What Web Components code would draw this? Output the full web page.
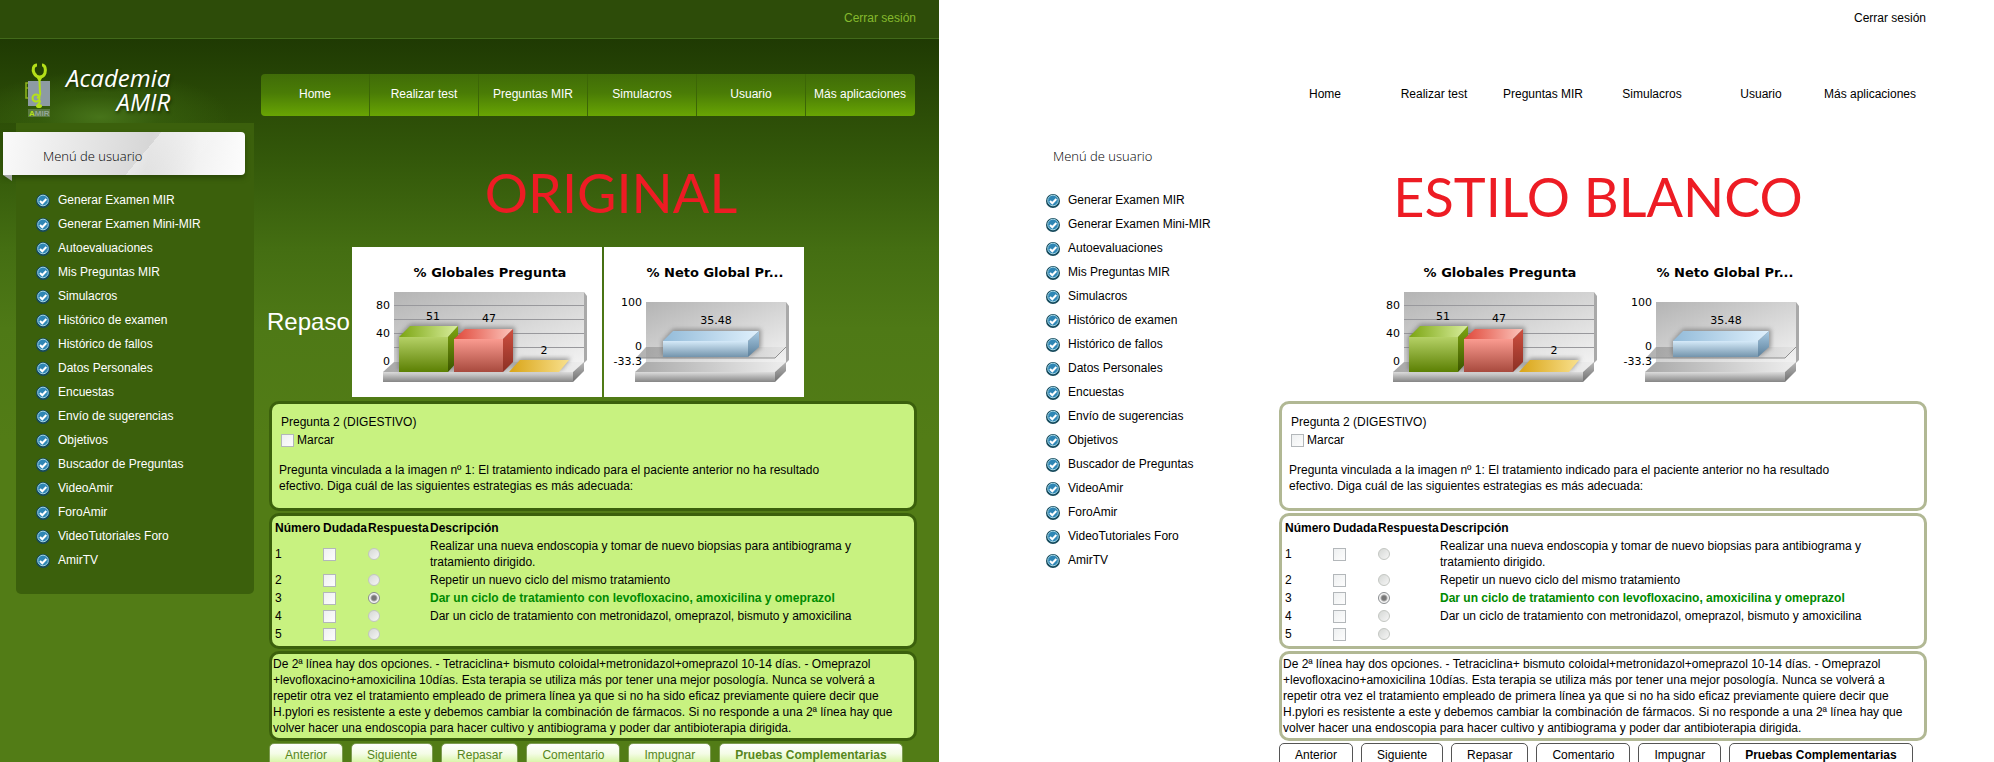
<!DOCTYPE html>
<html lang="es">
<head>
<meta charset="utf-8">
<title>Academia AMIR</title>
<style>
  body { margin: 0; background: #fff; overflow: hidden; font: 12px/16px "Liberation Sans", Arial, sans-serif; color: #000; }
</style>
</head>
<body>
<style-comparison></style-comparison>

<script>
const define = (name, html, setup) => {
  const template = document.createElement('template');
  template.innerHTML = html;
  customElements.define(name, class extends HTMLElement {
    constructor() {
      super();
      this.attachShadow({ mode: 'open' }).append(template.content.cloneNode(true));
    }
    connectedCallback() {
      if (setup && !this.ready) { this.ready = true; setup(this, this.shadowRoot); }
    }
  });
};

/* Logo */
define('amir-logo', `
<style>
  :host { display: flex; align-items: flex-start; gap: 15px; padding: 24px 0 0 24px; height: 60px;
    background: radial-gradient(ellipse 130px 46px at 100px 78px, #47741a 0, #3a640f99 45%, transparent 100%); }
  svg { display: block; flex: none; }
  .name { display: flex; flex-direction: column; font: italic 24px/24px "Open Sans", "Noto Sans", sans-serif; color: #fff;
    margin-top: 3px; text-shadow: 1px 2px 3px #1a3004; }
  .name span + span { text-align: right; }
</style>
<svg width="27" height="56" viewBox="0 0 27 56" aria-hidden="true">
  <path d="M4 18h22v25H4z" fill="#8d9ba3"/>
  <path d="M4 20H2v15h2M2 25h2" fill="none" stroke="#8fb51b" stroke-width="1.5"/>
  <path d="M13 2C9 2 8.500 7 10 10c1.500 3 3 4 5.500 4s4.500-1 5.500-4c1-4 0-8-3-8" fill="none" stroke="#b4e019" stroke-width="3"/>
  <path d="M12 13h7l-2.500 5L17 30h-2L14.500 18z" fill="#b4e019"/>
  <circle cx="12" cy="35" r="3.500" fill="none" stroke="#b4e019" stroke-width="2"/>
  <path d="M16 28c1 5-1 6-3 7M15 37c3 3-2 3-1 6" fill="none" stroke="#b4e019" stroke-width="2"/>
  <ellipse cx="15" cy="43" rx="3" ry="2" fill="#b4e019"/>
  <path d="M4 46h22v8H4z" fill="#5b7a42"/>
  <text x="5" y="53" font-family="Liberation Sans" font-weight="bold" font-size="8" fill="#b4e019">A<tspan fill="#93a699">MIR</tspan></text>
</svg>
<div class="name"><span>Academia</span><span>AMIR</span></div>
`);

/* Top navigation */
define('amir-nav', `
<style>
  :host { display: flex; height: 42px; border-radius: 4px; background: var(--nav-bg); }
  a { flex: 1 1 0; display: flex; align-items: center; justify-content: center; color: var(--link); text-decoration: none;
    white-space: nowrap; padding-bottom: 2px; border-right: 1px solid var(--nav-line); }
  a:last-child { border-right-color: transparent; }
</style>
<a href="#">Home</a><a href="#">Realizar test</a><a href="#">Preguntas MIR</a><a href="#">Simulacros</a><a href="#">Usuario</a><a href="#">Más aplicaciones</a>
`);

/* User menu */
define('check-icon', `
<style>:host { display: block; width: 14px; height: 14px; } svg { display: block; }</style>
<svg width="14" height="14" viewBox="0 0 14 14" aria-hidden="true">
  <circle cx="7" cy="7" r="7" fill="#164a5c"/>
  <circle cx="7" cy="6.500" r="5.300" fill="#2f86b5" stroke="#9fd4e6" stroke-width="1"/>
  <path d="M4 7l2.300 2.300L10.300 5" fill="none" stroke="#fff" stroke-width="2"/>
</svg>
`);
define('amir-menu', `
<style>
  :host { display: block; margin-left: 16px; padding: 9px 9px 22px 0; border-radius: 0 0 5px 5px; background: var(--menu-bg); }
  h2 { position: relative; margin: 0 0 13px -13px; height: 43px; padding: 0 0 7px 40px; box-sizing: border-box;
    display: flex; align-items: flex-end; font: 300 13px/24px "Open Sans", "Noto Sans", sans-serif; color: #000;
    border-radius: 0 4px 4px 0; background: var(--banner-bg); box-shadow: var(--banner-shadow); }
  h2::before { content: ""; position: absolute; left: 0; top: 100%; width: 9px; height: 6px; background: var(--tail);
    clip-path: polygon(0 0, 100% 0, 100% 100%); }
  ul { list-style: none; margin: 0; padding: 0 0 0 20px; }
  li { display: flex; align-items: center; gap: 8px; height: 24px; }
  a { color: var(--link); text-decoration: none; white-space: nowrap; }
  check-icon { margin-top: 2px; }
</style>
<h2>Menú de usuario</h2>
<ul></ul>
`, (host, root) => {
  const items = ['Generar Examen MIR', 'Generar Examen Mini-MIR', 'Autoevaluaciones', 'Mis Preguntas MIR', 'Simulacros',
    'Histórico de examen', 'Histórico de fallos', 'Datos Personales', 'Encuestas', 'Envío de sugerencias', 'Objetivos',
    'Buscador de Preguntas', 'VideoAmir', 'ForoAmir', 'VideoTutoriales Foro', 'AmirTV'];
  root.querySelector('ul').innerHTML = items.map(t => `<li><check-icon></check-icon><a href="#">${t}</a></li>`).join('');
});

/* Charts */
const chartDefs = `
<style>
  :host { display: block; flex: none; background: #fff; }
  svg { display: block; font: 11px "DejaVu Sans", Verdana, sans-serif; }
  .t { font-size: 13px; font-weight: bold; }
</style>`;
const grad = (id, a, b, extra = 'x2="0" y2="1"') =>
  `<linearGradient id="${id}" ${extra}><stop stop-color="${a}"/><stop offset="1" stop-color="${b}"/></linearGradient>`;
const common = grad('wall', '#b4b4b4', '#f2f2f2', 'x2="1" y2="1"') + grad('floor', '#a8a8a8', '#eeeeee', 'x2="1" y2="0"') +
  grad('front', '#dcdcdc', '#858585') + grad('side', '#b8b8b8', '#707070') +
  '<filter id="soft" x="-20%" y="-20%" width="140%" height="140%"><feGaussianBlur stdDeviation="2"/></filter>';

define('global-chart', `${chartDefs}
<svg width="250" height="150" viewBox="0 0 250 150" role="img" aria-label="% Globales Pregunta">
  <defs>${common}
    ${grad('g1', '#b5d166', '#5c8003')}${grad('g2', '#7ba511', '#d9ee9d', 'x2="1" y2="0"')}${grad('g3', '#7ea60f', '#3b5400')}
    ${grad('r1', '#fa9b90', '#a84a3e')}${grad('r2', '#e0483a', '#fcc4bb', 'x2="1" y2="0"')}${grad('r3', '#cf4f40', '#8b3024')}
    ${grad('y1', '#d9a416', '#f8e08d', 'x2="1" y2="0"')}
  </defs>
  <path d="M42 45H232V115H42z" fill="url(#wall)"/>
  <path d="M232 45l3 4v64l-3 3z" fill="#a9a9a9"/>
  <path d="M42 58.500H232M42 72.500H232M42 86.500H232M42 100.500H232" stroke="#98989c"/>
  <path d="M42 115H232L221 125H31z" fill="url(#floor)"/>
  <path d="M31 125H221V135H31z" fill="url(#front)"/>
  <path d="M221 125l11-10v9l-11 11z" fill="url(#side)"/>
  <path d="M46 90l12-13h50v38l-10 8H46zM102 92l10-12h51v35l-10 8h-51zM158 123l10-12h51l-10 12z" fill="#666" opacity=".6" filter="url(#soft)"/>
  <path d="M47 90l11-11h48L96 90z" fill="url(#g2)"/><path d="M96 90l10-11v35L96 125z" fill="url(#g3)"/><path d="M47 90h49v35H47z" fill="url(#g1)"/>
  <path d="M102 92l11-10h48l-10 10z" fill="url(#r2)"/><path d="M151 92l10-10v33l-10 10z" fill="url(#r3)"/><path d="M102 92h49v33h-49z" fill="url(#r1)"/>
  <path d="M157 125l11-12h49l-10 12z" fill="url(#y1)"/>
  <text class="t" x="138" y="30" text-anchor="middle">% Globales Pregunta</text>
  <g text-anchor="middle"><text x="81" y="73">51</text><text x="137" y="75">47</text><text x="192" y="107">2</text></g>
  <g text-anchor="end"><text x="38" y="62">80</text><text x="38" y="90">40</text><text x="38" y="118">0</text></g>
</svg>`);

define('net-chart', `${chartDefs}
<svg width="200" height="150" viewBox="0 0 200 150" role="img" aria-label="% Neto Global Pregunta">
  <defs>${common}
    ${grad('b1', '#d5eaf9', '#7394ac')}${grad('b2', '#93bbd9', '#dff0fc', 'x2="1" y2="0"')}${grad('b3', '#a9cbe4', '#5b7f9a')}
    ${grad('z', '#8f8f8f', '#e0e0e0', 'x2="1" y2="0"')}
  </defs>
  <path d="M42 55H182V115H42z" fill="url(#wall)"/>
  <path d="M182 55l3 4v54l-3 3z" fill="#a9a9a9"/>
  <path d="M42 115H182L171 125H31z" fill="url(#floor)"/>
  <path d="M31 125H171V135H31z" fill="url(#front)"/>
  <path d="M171 125l11-10v9l-11 11z" fill="url(#side)"/>
  <path d="M42 100H182L171 111H32z" fill="url(#z)" opacity=".7"/>
  <path d="M32 111H171L182 100" fill="none" stroke="#8f8f8f"/>
  <path d="M58 94l11-12h88v19l-11 8H58z" fill="#666" opacity=".6" filter="url(#soft)"/>
  <path d="M59 94l10-10h86l-11 10z" fill="url(#b2)"/><path d="M144 94l11-10v16l-11 10z" fill="url(#b3)"/><path d="M59 94h85v16H59z" fill="url(#b1)"/>
  <text class="t" x="111" y="30" text-anchor="middle">% Neto Global Pr...</text>
  <text x="112" y="77" text-anchor="middle">35.48</text>
  <g text-anchor="end"><text x="38" y="59">100</text><text x="38" y="103">0</text><text x="38" y="118">-33.3</text></g>
</svg>`);

/* Rounded box */
define('amir-card', `
<style>
  :host { display: block; border: 3px solid var(--card-line); border-radius: 10px; background: var(--card-bg); }
</style>
<slot></slot>`);

const controls = `
  input { appearance: none; display: block; margin: 0; width: 13px; height: 13px; box-sizing: border-box; }
  input[type=checkbox] { border: 1px solid #b3b7ba; background: linear-gradient(135deg, #eef0f1, #fdfdfd); }
  input[type=radio] { width: 12px; height: 12px; border: 1px solid #c3c6c2; border-radius: 50%; background: linear-gradient(135deg, #d5d8d5, #f6f6f6); }
  input[type=radio]:checked { border-color: #8a8d90; background: radial-gradient(circle, #777 0 2px, #aaa 3px, #f4f4f4 4px); }`;

/* Question */
define('amir-question', `
<style>
  :host { display: block; padding: 10px 56px 14px 7px; }
  ${controls}
  .head { padding-left: 2px; }
  label { display: flex; align-items: center; gap: 3px; height: 18px; margin: 1px 0 13px; }
  p { margin: 0; }
</style>
<div class="head">Pregunta 2 (DIGESTIVO)<label><input type="checkbox">Marcar</label></div>
<p>Pregunta vinculada a la imagen nº 1: El tratamiento indicado para el paciente anterior no ha resultado efectivo. Diga cuál de las siguientes estrategias es más adecuada:</p>
`);

/* Answers */
define('amir-answers', `
<style>
  :host { display: block; padding: 2px 32px 2px 1px; }
  ${controls}
  table { border-spacing: 2px; border-collapse: separate; width: 100%; table-layout: fixed; }
  th, td { padding: 0; text-align: left; height: 16px; white-space: nowrap; }
  td:last-child { white-space: normal; }
  .n { width: 46px; } .d { width: 43px; } .r { width: 60px; }
  .ok { color: #008a00; font-weight: bold; }
</style>
<table>
  <colgroup><col class="n"><col class="d"><col class="r"><col></colgroup>
  <thead><tr><th>Número</th><th>Dudada</th><th>Respuesta</th><th>Descripción</th></tr></thead>
  <tbody></tbody>
</table>`, (host, root) => {
  const rows = ['Realizar una nueva endoscopia y tomar de nuevo biopsias para antibiograma y tratamiento dirigido.',
    'Repetir un nuevo ciclo del mismo tratamiento',
    'Dar un ciclo de tratamiento con levofloxacino, amoxicilina y omeprazol',
    'Dar un ciclo de tratamiento con metronidazol, omeprazol, bismuto y amoxicilina', ''];
  root.querySelector('tbody').innerHTML = rows.map((t, i) => `<tr><td>${i + 1}</td>
    <td><input type="checkbox" aria-label="Dudada ${i + 1}"></td>
    <td><input type="radio" name="answer" aria-label="Respuesta ${i + 1}"${i === 2 ? ' checked' : ''}></td>
    <td${i === 2 ? ' class="ok"' : ''}>${t}</td></tr>`).join('');
});

/* Bottom buttons */
define('amir-actions', `
<style>
  :host { display: flex; gap: 8px; }
  button { flex: none; font: inherit; height: 26px; padding: 0 15px 2px; border: 1px solid var(--btn-line); border-radius: 5px;
    background: var(--btn-bg); color: var(--btn-text); white-space: nowrap; }
  button:last-child { font-weight: bold; }
</style>
<button>Anterior</button><button>Siguiente</button><button>Repasar</button><button>Comentario</button><button>Impugnar</button><button>Pruebas Complementarias</button>
`);

/* One themed page */
define('amir-page', `
<style>
  :host { display: block; min-width: 0; height: 100vh; overflow: hidden; background: var(--page-bg); }
  .top { height: 38px; box-sizing: border-box; padding: 10px 23px 0 0; text-align: right; }
  .top a { color: var(--logout); text-decoration: none; }
  .body { border-top: 1px solid var(--top-line); background: var(--body-bg); min-height: 100%;
    display: grid; grid-template-columns: 254px minmax(0, 1fr); grid-template-rows: 84px auto; align-items: start; }
  amir-nav { margin: 35px 24px 0 7px; }
  main { padding: 0 22px 0 15px; }
  h1 { margin: 0; height: 124px; box-sizing: border-box; padding: var(--title-pad); text-align: center;
    font: 54px/64px Lato, "Open Sans", sans-serif; color: #ed1c24; white-space: nowrap; }
  .stats { display: flex; align-items: center; gap: 2px; height: 150px; margin: 0 0 4px -2px; }
  .stats h3 { margin: 0; width: 83px; font-size: 24px; line-height: 28px; font-weight: normal; color: #fff; }
  amir-card { margin-bottom: 2px; }
  .note { margin: 0; padding: 2px 8px 2px 1px; }
</style>
<div class="top"><a href="#">Cerrar sesión</a></div>
<div class="body">
  <div><slot name="logo"></slot></div>
  <amir-nav></amir-nav>
  <amir-menu></amir-menu>
  <main>
    <h1><slot></slot></h1>
    <div class="stats"><h3><slot name="section"></slot></h3><global-chart></global-chart><net-chart></net-chart></div>
    <amir-card><amir-question></amir-question></amir-card>
    <amir-card><amir-answers></amir-answers></amir-card>
    <amir-card><p class="note">De 2ª línea hay dos opciones. - Tetraciclina+ bismuto coloidal+metronidazol+omeprazol 10-14 días. - Omeprazol +levofloxacino+amoxicilina 10días. Esta terapia se utiliza más por tener una mejor posología. Nunca se volverá a repetir otra vez el tratamiento empleado de primera línea ya que si no ha sido eficaz previamente quiere decir que H.pylori es resistente a este y debemos cambiar la combinación de fármacos. Si no responde a una 2ª línea hay que volver hacer una endoscopia para hacer cultivo y antibiograma y poder dar antibioterapia dirigida.</p></amir-card>
    <amir-actions></amir-actions>
  </main>
</div>`);

define('style-comparison', `
<style>
  :host { display: grid; grid-template-columns: 939fr 939fr; column-gap: 71px; padding-right: 45px; }
  .green {
    --page-bg: #2d4c09; --top-line: #42691a; --logout: #85b92e; --link: #fff;
    --body-bg: linear-gradient(#1f3a03 0, #2c4d07 75px, #33580a 120px, #446e12 210px, #4e7916 290px, #527c16 400px);
    --nav-bg: linear-gradient(#406c08 0, #4a7c06 45%, #68a503 100%); --nav-line: #3c6606;
    --menu-bg: #3b600c; --tail: #a5a8a5; --banner-shadow: 0 3px 5px #2a4707;
    --banner-bg: linear-gradient(130deg, transparent 0 57%, #ffffff66 57%, transparent 80%), linear-gradient(100deg, #fafafa 0, #d6d6d6 60%, #f2f2f2 80%, #fdfdfd 100%);
    --card-line: #3b600c; --card-bg: #c8f280;
    --btn-line: #7d9b52; --btn-bg: linear-gradient(#fff 0, #f4fce6 40%, #c8f280 100%); --btn-text: #56861c;
    --title-pad: 38px 0 0 36px;
  }
  .white {
    --page-bg: #fff; --top-line: transparent; --logout: #000; --link: #000; --body-bg: none; --nav-bg: none; --nav-line: transparent;
    --menu-bg: none; --tail: none; --banner-shadow: none; --banner-bg: none;
    --card-line: #b1b894; --card-bg: #fff;
    --btn-line: #555; --btn-bg: #fff; --btn-text: #000;
    --title-pad: 42px 10px 0 0;
  }
</style>
<amir-page class="green"><amir-logo slot="logo"></amir-logo><span slot="section">Repaso</span>ORIGINAL</amir-page>
<amir-page class="white">ESTILO BLANCO</amir-page>
`);
</script>
</body>
</html>
